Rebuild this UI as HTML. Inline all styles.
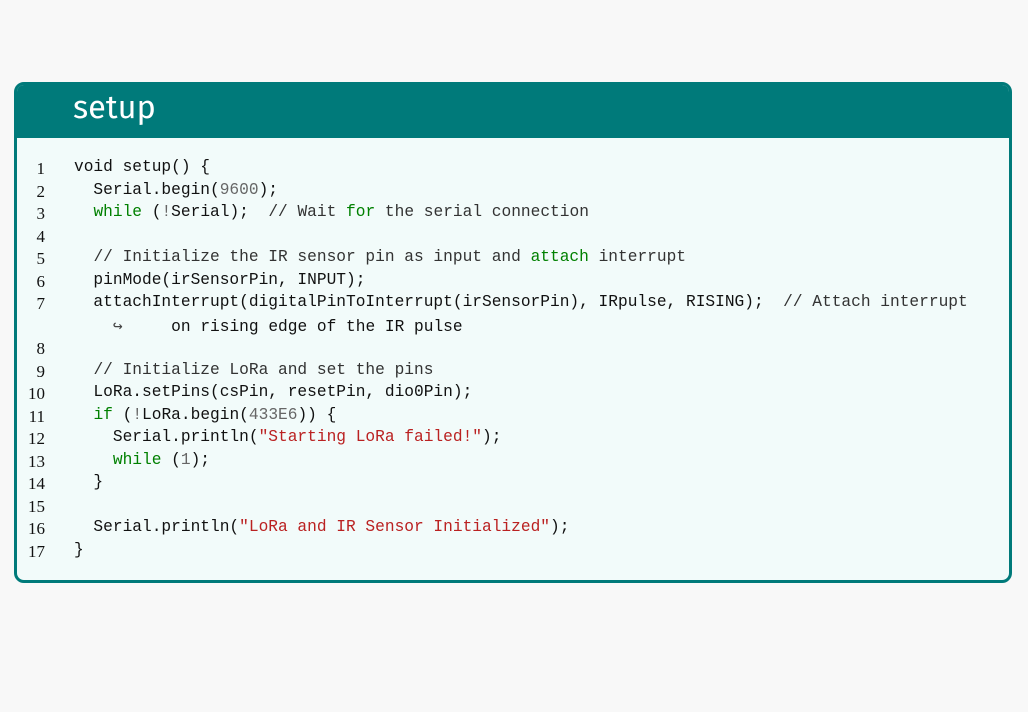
<!DOCTYPE html>
<html><head><meta charset="utf-8"><style>
html,body{margin:0;padding:0;background:#f8f8f8;width:1028px;height:712px;overflow:hidden}
.box{position:absolute;left:14px;top:82px;width:992px;height:495px;border:3px solid #007a7a;border-radius:10px;background:#f2fbfa;overflow:hidden}
.hd{position:absolute;left:0;top:0;right:0;height:53px;background:#007a7a}
.hd span{position:absolute;left:56px;top:3px;font-family:"Fira Sans","Liberation Sans",sans-serif;font-size:32.5px;color:#fff}
.ln{position:absolute;left:0;width:28px;text-align:right;font-family:"Liberation Serif",serif;font-size:17px;color:#111}
.cd{position:absolute;left:57px;font-family:"Liberation Mono",monospace;font-size:16.2px;color:#111;white-space:pre}
.k{color:#008000;font-weight:normal}.n{color:#666}.s{color:#ba2121}.c{color:#333}
.l{position:absolute;left:0;top:2px;width:100%;height:100%}
</style></head><body>
<div class="box"><div class="hd"><span>setup</span></div>
<div class="l">
<div class="ln" style="top:72px">1</div><div class="cd" style="top:71px">void setup() {</div>
<div class="ln" style="top:94.5px">2</div><div class="cd" style="top:93.5px">  Serial.begin(<span class="n">9600</span>);</div>
<div class="ln" style="top:117px">3</div><div class="cd" style="top:116px">  <span class="k">while</span> (<span class="n">!</span>Serial);  <span class="c">// Wait <span class="k">for</span> the serial connection</span></div>
<div class="ln" style="top:139.5px">4</div>
<div class="ln" style="top:162px">5</div><div class="cd" style="top:161px">  <span class="c">// Initialize the IR sensor pin as input and <span class="k">attach</span> interrupt</span></div>
<div class="ln" style="top:184.5px">6</div><div class="cd" style="top:183.5px">  pinMode(irSensorPin, INPUT);</div>
<div class="ln" style="top:207px">7</div><div class="cd" style="top:206px">  attachInterrupt(digitalPinToInterrupt(irSensorPin), IRpulse, RISING);  <span class="c">// Attach interrupt</span></div>
<div class="cd" style="top:228.5px">    <span style="color:#444">↪</span>     on rising edge of the IR pulse</div>
<div class="ln" style="top:252px">8</div>
<div class="ln" style="top:274.5px">9</div><div class="cd" style="top:273.5px">  <span class="c">// Initialize LoRa and set the pins</span></div>
<div class="ln" style="top:297px">10</div><div class="cd" style="top:296px">  LoRa.setPins(csPin, resetPin, dio0Pin);</div>
<div class="ln" style="top:319.5px">11</div><div class="cd" style="top:318.5px">  <span class="k">if</span> (<span class="n">!</span>LoRa.begin(<span class="n">433E6</span>)) {</div>
<div class="ln" style="top:342px">12</div><div class="cd" style="top:341px">    Serial.println(<span class="s">"Starting LoRa failed!"</span>);</div>
<div class="ln" style="top:364.5px">13</div><div class="cd" style="top:363.5px">    <span class="k">while</span> (<span class="n">1</span>);</div>
<div class="ln" style="top:387px">14</div><div class="cd" style="top:386px">  }</div>
<div class="ln" style="top:409.5px">15</div>
<div class="ln" style="top:432px">16</div><div class="cd" style="top:431px">  Serial.println(<span class="s">"LoRa and IR Sensor Initialized"</span>);</div>
<div class="ln" style="top:454.5px">17</div><div class="cd" style="top:453.5px">}</div>
</div>
</div>
</body></html>
